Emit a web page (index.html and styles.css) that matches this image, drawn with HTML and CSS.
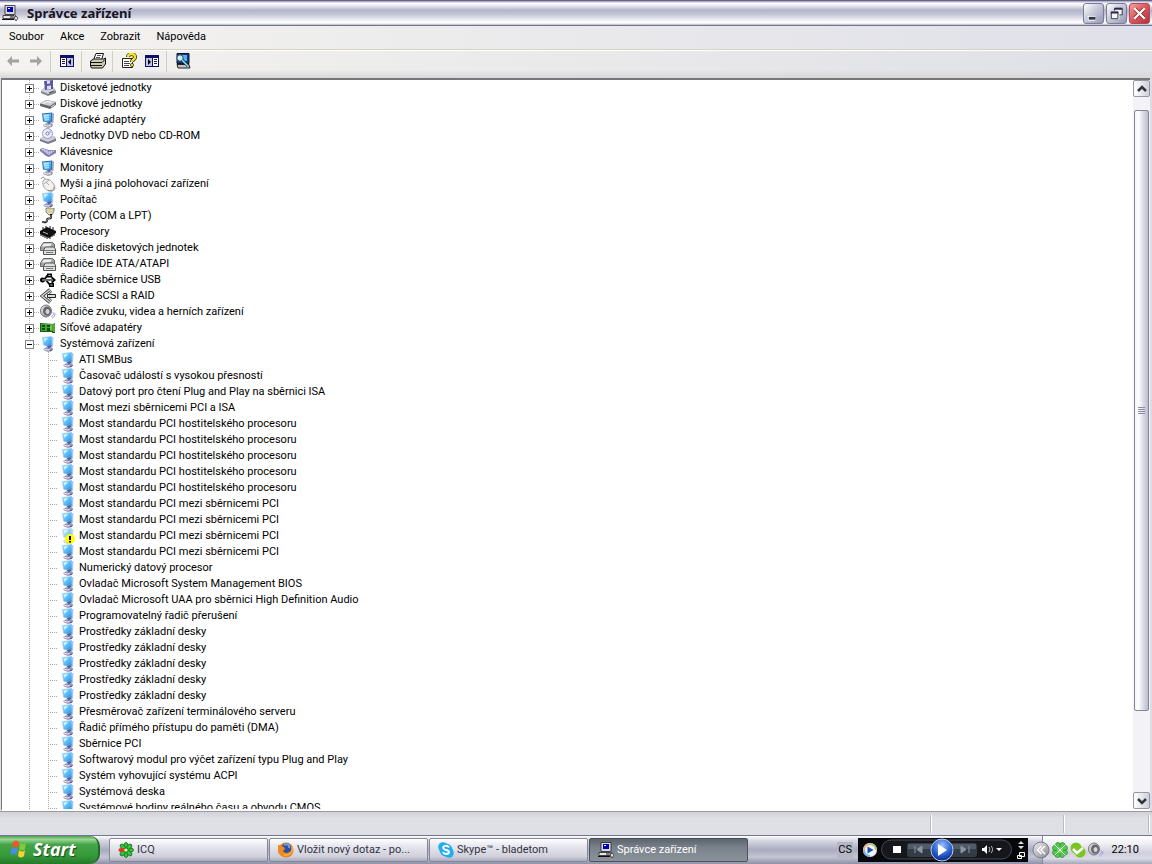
FILE: index.html
```html
<!DOCTYPE html>
<html lang="cs">
<head>
<meta charset="utf-8">
<title>Správce zařízení</title>
<link rel="stylesheet" href="styles.css">
</head>
<body>
<svg class="defs" aria-hidden="true">
<defs>
<linearGradient id="scr" x1="0" y1="0" x2="1" y2="1"><stop offset="0" stop-color="#a8e4fb"/><stop offset=".5" stop-color="#58bcf8"/><stop offset="1" stop-color="#2f86e0"/></linearGradient>
<linearGradient id="gry" x1="0" y1="0" x2="1" y2="1"><stop offset="0" stop-color="#f2f2f4"/><stop offset="1" stop-color="#85858c"/></linearGradient>
<radialGradient id="ball" cx=".5" cy=".3" r=".7"><stop offset="0" stop-color="#9cc6ff"/><stop offset=".6" stop-color="#2a5fd0"/><stop offset="1" stop-color="#0b2a80"/></radialGradient>
</defs>
<symbol id="system" viewBox="0 0 16 16"><path d="M11 .5l2.500 1-.5 9-2 1z" fill="#b4c4e4"/><path d="M2.500 1.500l9-1 .5 9.500-4 .5-4.500-1.500z" fill="url(#scr)" stroke="#8cc8f0" stroke-width=".6"/><path d="M4 2.500l4-.5-3.500 4z" fill="#d6f4ff"/><path d="M7 10l4.500-.5L10 13H8z" fill="#5a5c98"/><path d="M3 13l3.500-2 2 1.500L12 11l1 2-1 2-4 1-4-1.500z" fill="#9c98bc"/><path d="M3.500 13l4 1 2-.5" fill="none" stroke="#e8e8f4"/><path d="M10 15l2.500-1.500" stroke="#54547c"/></symbol>
<symbol id="monitor" viewBox="0 0 16 16"><path d="M12 .5l2 1-.5 9-2 1z" fill="#a4a8bc"/><path d="M2 1.500l10-1v9.500l-4 .5-5-1z" fill="#2c70b8"/><path d="M3 2.500l8-1v8l-3 .5-4-1z" fill="url(#scr)"/><path d="M4 4l5-.7M4 6l5-.4M5 8l4-.3" stroke="#d8f2ff"/><path d="M7 10l4-.5-1 3-2 .5z" fill="#62668a"/><path d="M3 13l4-2 2 1 3-1 1 2-1 2-4 1-4-1.500z" fill="#a0a0b4"/><path d="M4 13l4 1 3-1" fill="none" stroke="#f2f2f4"/></symbol>
<symbol id="floppy" viewBox="0 0 16 16"><path d="M1 11l4-4h8l3 4v2l-8 3-7-3z" fill="#81818b"/><path d="M1 11l4-4h8l2 4-7 3z" fill="#d0d0d8"/><path d="M4 1l9-1v9l-8 1z" fill="#5c58a4"/><path d="M7 .8l3-.3v3L7 4zM7 6l4-.5V9l-4 .6z" fill="#dcdcf2"/><path d="M9 13l5-2" stroke="#444"/></symbol>
<symbol id="disk" viewBox="0 0 16 16"><path d="M0 7.500l6-3.500 10 2v3l-6 4-10-3z" fill="#66666c"/><path d="M0 7.500l6-3.500 10 2-6 4z" fill="#cfcfd2"/><path d="M3 7.500l4-2 4 1" fill="none" stroke="#fff"/><path d="M11 11l4-2.500" stroke="#ddd"/></symbol>
<symbol id="cd" viewBox="0 0 16 16"><path d="M0 11l4-3h10l2 3v2l-8 3-8-3z" fill="#77778b"/><path d="M0 11l4-3h10l1 3-7 3z" fill="#cccde2"/><circle cx="7.500" cy="5.500" r="5" fill="#ececf6" stroke="#9a9abb"/><path d="M7.500 5.500l3-4 2 3z" fill="#b8c8ff"/><circle cx="7.500" cy="5.500" r="1.500" fill="#fff" stroke="#7878aa"/></symbol>
<symbol id="keyboard" viewBox="0 0 16 16"><path d="M0 5l3-1 6 2 7 0v3l-7 4-3-1-6-5z" fill="#8080aa"/><path d="M1 5.500l3-1 5 2.500 6-.5-6 4.500z" fill="#d2d2ee"/><path d="M3 6l6 4M5 5.500l6 4M8 7.500l5 .5" stroke="#8a8aba" stroke-dasharray="1 1"/></symbol>
<symbol id="mouse" viewBox="0 0 16 16"><path d="M1 3c1-3 5-2 4 2" fill="none" stroke="#888"/><path d="M3 5c3-3 7-2 10 2 4 6 1 9-3 8-5 0-8-6-7-10z" fill="#f2f1ed" stroke="#a5a39f"/><path d="M4 8l5-4M6 6l3 3" stroke="#aaa"/><path d="M8 14.500c5 1 6-1 6-4" fill="none" stroke="#85837f"/></symbol>
<symbol id="port" viewBox="0 0 16 16"><path d="M6 0h8v3l-2 4H9L6 4z" fill="#dadada" stroke="#555" stroke-width=".7"/><path d="M7 2h6M8 4h4" stroke="#e0d040"/><path d="M11 6v3c0 3-4 0-4 3s-3 2-5 2" fill="none" stroke="#111" stroke-width="2"/><path d="M11 7v2c0 2-4 1-4 3s-3 2-5 2" fill="none" stroke="#ccc" stroke-width=".7"/></symbol>
<symbol id="cpu" viewBox="0 0 16 16"><path d="M0 7l7-4 9 4v2l-7 5-9-4z" fill="#111"/><path d="M1 9v3M3 10v3M5 11v3M7 12v3M10 12v3M12 10v3M14 9v3M3 3v3M6 2v3M10 2v3M13 3v3" stroke="#111"/><path d="M3 8l5 2" stroke="#bbb"/></symbol>
<symbol id="controller" viewBox="0 0 16 16"><path d="M.5 7l3-4.500h9l2 2v6H.5z" fill="#a2a2a2" stroke="#666"/><path d="M1.500 6.500l2.500-3h8l-2 3z" fill="#eee"/><path d="M3.500 10l2-3h8l2 2v5.500h-12z" fill="#dededc" stroke="#555"/><path d="M4 10.500h11M6 12.500h7" stroke="#777"/></symbol>
<symbol id="usb" viewBox="0 0 16 16"><path d="M2 8h12M4 8l3-4h3M6 8l4 5h2" fill="none" stroke="#111" stroke-width="2"/><path d="M11.500 4l4.500 4-4.500 4z"/><circle cx="2.500" cy="8" r="2.500"/><path d="M7 1.500h5v4H7zM9 11h5v4H9z"/><path d="M8.500 3.500h2M10.500 13h2M2 8h11" stroke="#ccc"/></symbol>
<symbol id="scsi" viewBox="0 0 16 16"><path d="M10 1.500L2 8l8 6.500" fill="none" stroke="#333" stroke-width="3"/><path d="M10 1.500L2 8l8 6.500" fill="none" stroke="#ddd" stroke-width="1.400"/><path d="M12 3.500L7 8l5 4.500" fill="none" stroke="#333"/><path d="M7.500 6.500h8v3h-8z" fill="#ddd" stroke="#222"/></symbol>
<symbol id="sound" viewBox="0 0 16 16"><ellipse cx="6" cy="7" rx="5.500" ry="6" fill="url(#gry)" stroke="#77777c"/><ellipse cx="7" cy="7" rx="4" ry="4.500" fill="#66666c"/><ellipse cx="7.500" cy="7.500" rx="2" ry="2.500" fill="#d4d4d8"/><path d="M13 8c1 2 0 4-2 5M15 9c0 3-1 4-3 5.500" fill="none" stroke="#a4a4de"/></symbol>
<symbol id="net" viewBox="0 0 16 16"><path d="M0 3l13 1 2-1v10h-3v-1H0z" fill="#176017"/><path d="M1 4h12v7H1z" fill="#46a52e"/><path d="M2 5h3v2H2zM7 5h3v2H7zM2 8h3v2H2zM7 8h3v3H7z" fill="#124a10"/><path d="M11 5v5M14 4v8" stroke="#a9df7d"/></symbol>
<symbol id="warn" viewBox="0 0 16 16"><use href="#system" width="16" height="16" opacity=".65"/><circle cx="10" cy="11" r="5" fill="#ffff00"/><path d="M10 8v4M10 13v1.500" stroke="#000" stroke-width="2"/></symbol>
<symbol id="devmgr" viewBox="0 0 16 16"><path d="M3 .5h10v9H3z" fill="#d8d8d8" stroke="#222" stroke-width=".8"/><path d="M5 2h6v5H5z" fill="#0000b8"/><path d="M6 3h2v1H6z" fill="#fff"/><path d="M1 10.500h11v3H1z" fill="#e8e8e8" stroke="#222" stroke-width=".8"/><path d="M0 14.500h12M8 12h3" stroke="#111"/><path d="M12 9l2 2v3" fill="none" stroke="#555"/><path d="M12 13l2-2 2 2-2 3z" fill="#ddd" stroke="#333" stroke-width=".8"/></symbol>
<symbol id="icq" viewBox="0 0 16 16"><g fill="#3cc43c" stroke="#0b6b18" stroke-width=".8"><ellipse cx="8" cy="3.500" rx="2" ry="3"/><ellipse cx="8" cy="12.500" rx="2" ry="3"/><ellipse cx="12.500" cy="8" rx="3" ry="2"/><ellipse cx="11.300" cy="4.700" rx="2" ry="3" transform="rotate(45 11.300 4.700)"/><ellipse cx="11.300" cy="11.300" rx="2" ry="3" transform="rotate(-45 11.300 11.300)"/><ellipse cx="4.700" cy="11.300" rx="2" ry="3" transform="rotate(45 4.700 11.300)"/><ellipse cx="4.700" cy="4.700" rx="2" ry="3" transform="rotate(-45 4.700 4.700)"/></g><ellipse cx="3.500" cy="8" rx="3" ry="2" fill="#e33525"/><circle cx="8" cy="8" r="1.600" fill="#e4f4a0"/></symbol>
<symbol id="clover" viewBox="0 0 16 16"><g fill="#58c850" stroke="#218a26" stroke-width=".7"><circle cx="6" cy="3" r="2.500"/><circle cx="10.500" cy="3" r="2.500"/><circle cx="13" cy="6" r="2.500"/><circle cx="13" cy="10.500" r="2.500"/><circle cx="10" cy="13" r="2.500"/><circle cx="5.500" cy="13" r="2.500"/><circle cx="3" cy="10.500" r="2.500"/><circle cx="3" cy="6" r="2.500"/></g><circle cx="8" cy="8" r="3.500" fill="#6ace5c"/><path d="M3 3l10 10M13 3L3 13" stroke="#e4f6df"/></symbol>
</svg>

<header class="titlebar">
<svg class="ico"><use href="#devmgr"/></svg>
<h1>Správce zařízení</h1>
<div class="winbtns">
<button class="winbtn" aria-label="Minimalizovat"><svg viewBox="0 0 20 20"><path d="M4 15h8" stroke="#fff" stroke-width="5"/><path d="M5 15h7" stroke="#33334d" stroke-width="3"/></svg></button>
<button class="winbtn" aria-label="Obnovit"><svg viewBox="0 0 20 20"><path d="M8 4h8v8h-3v4H4V8h4z" fill="#f4f4f8"/><g fill="none" stroke="#2a2a44"><path d="M8 7V4.500h8v7h-3"/><path d="M8 5h8" stroke-width="2"/><path d="M4.500 8.500h7v7h-7z"/><path d="M4 9h8" stroke-width="2"/></g></svg></button>
<button class="winbtn close" aria-label="Zavřít"><svg viewBox="0 0 20 20"><path d="M5 5l10 10M15 5L5 15" stroke="#8c1c20" stroke-width="4"/><path d="M4.500 4.500l11 11M15.500 4.500l-11 11" stroke="#fff" stroke-width="2.500"/></svg></button>
</div>
</header>

<nav class="menubar">
<button>Soubor</button><button>Akce</button><button>Zobrazit</button><button>Nápověda</button>
</nav>

<div class="toolbar">
<button aria-label="Zpět"><svg viewBox="0 0 16 16"><path d="M2 8l5-5v3.500h7v3H7V13z" fill="#a2a2a0"/></svg></button>
<button aria-label="Vpřed"><svg viewBox="0 0 16 16"><path d="M14 8L9 3v3.500H2v3h7V13z" fill="#a2a2a0"/></svg></button>
<span class="sep"></span>
<button aria-label="Zobrazit strom"><svg viewBox="0 0 16 16"><path d="M1 2h14v12H1z" fill="#10106a"/><path d="M2 5h5v8H2z" fill="#fff"/><path d="M3 6.500h3M3 8.500h3M3 10.500h3" stroke="#222"/><path d="M8 5h6v8H8z" fill="#c0c6ea"/><path d="M12 6v6L9 9z"/></svg></button>
<span class="sep"></span>
<button aria-label="Tisk"><svg viewBox="0 0 16 16"><path d="M6 .5h7.500l-2 6.500H3.500z" fill="#fff" stroke="#111"/><path d="M7 2.500h4M6 4.500h4" stroke="#555"/><path d="M.5 8l3-2h10l2-1v6l-3 4h-11l-1-2z" fill="#ccc9b6" stroke="#111"/><path d="M1 9.500h11l3-3M1 12.500h11" fill="none" stroke="#111"/><path d="M8 11h3" stroke="#e2d31a"/></svg></button>
<span class="sep"></span>
<button aria-label="Vlastnosti"><svg viewBox="0 0 16 16"><path d="M1.500 5.500h10v9h-10z" fill="#fff" stroke="#222"/><path d="M3 8.500h5M3 10.500h6M3 12.500h5" stroke="#444"/><path d="M7 4c0-4 7-4 7 0 0 3-3 2-3 5" fill="none" stroke="#222" stroke-width="4"/><path d="M7 4c0-4 7-4 7 0 0 3-3 2-3 5" fill="none" stroke="#f6e51d" stroke-width="2.400"/><circle cx="11" cy="12" r="1.600" fill="#f6e51d" stroke="#222" stroke-width=".7"/></svg></button>
<button aria-label="Zobrazit podokno"><svg viewBox="0 0 16 16"><path d="M1 2h14v12H1z" fill="#10106a"/><path d="M9 5h5v8H9z" fill="#fff"/><path d="M2 5h6v8H2z" fill="#c0c6ea"/><path d="M10 6.500h3M10 8.500h3M10 10.500h3" stroke="#222"/><path d="M4 6v6l3-3z"/></svg></button>
<span class="sep"></span>
<button aria-label="Vyhledat změny hardwaru"><svg viewBox="0 0 16 16"><path d="M2 .5h12v10H2z" fill="#0a3a92" stroke="#112"/><path d="M3 2h9v6H3z" fill="#54b0e8"/><path d="M2 11.500h12l1 3.500H3z" fill="#bfc4cf" stroke="#222"/><circle cx="5" cy="5" r="3.200" fill="#c4f0fa" stroke="#345"/><path d="M7 7l6 6" stroke="#234" stroke-width="3"/><path d="M7 7l6 6" stroke="#8ce2f4" stroke-width="1.500"/></svg></button>
</div>

<main class="client">
<ul class="tree">
<li><div class="row"><button class="exp" aria-label="Rozbalit"></button><svg class="ico"><use href="#floppy"/></svg>Disketové jednotky</div></li>
<li><div class="row"><button class="exp" aria-label="Rozbalit"></button><svg class="ico"><use href="#disk"/></svg>Diskové jednotky</div></li>
<li><div class="row"><button class="exp" aria-label="Rozbalit"></button><svg class="ico"><use href="#monitor"/></svg>Grafické adaptéry</div></li>
<li><div class="row"><button class="exp" aria-label="Rozbalit"></button><svg class="ico"><use href="#cd"/></svg>Jednotky DVD nebo CD-ROM</div></li>
<li><div class="row"><button class="exp" aria-label="Rozbalit"></button><svg class="ico"><use href="#keyboard"/></svg>Klávesnice</div></li>
<li><div class="row"><button class="exp" aria-label="Rozbalit"></button><svg class="ico"><use href="#monitor"/></svg>Monitory</div></li>
<li><div class="row"><button class="exp" aria-label="Rozbalit"></button><svg class="ico"><use href="#mouse"/></svg>Myši a jiná polohovací zařízení</div></li>
<li><div class="row"><button class="exp" aria-label="Rozbalit"></button><svg class="ico"><use href="#system"/></svg>Počítač</div></li>
<li><div class="row"><button class="exp" aria-label="Rozbalit"></button><svg class="ico"><use href="#port"/></svg>Porty (COM a LPT)</div></li>
<li><div class="row"><button class="exp" aria-label="Rozbalit"></button><svg class="ico"><use href="#cpu"/></svg>Procesory</div></li>
<li><div class="row"><button class="exp" aria-label="Rozbalit"></button><svg class="ico"><use href="#controller"/></svg>Řadiče disketových jednotek</div></li>
<li><div class="row"><button class="exp" aria-label="Rozbalit"></button><svg class="ico"><use href="#controller"/></svg>Řadiče IDE ATA/ATAPI</div></li>
<li><div class="row"><button class="exp" aria-label="Rozbalit"></button><svg class="ico"><use href="#usb"/></svg>Řadiče sběrnice USB</div></li>
<li><div class="row"><button class="exp" aria-label="Rozbalit"></button><svg class="ico"><use href="#scsi"/></svg>Řadiče SCSI a RAID</div></li>
<li><div class="row"><button class="exp" aria-label="Rozbalit"></button><svg class="ico"><use href="#sound"/></svg>Řadiče zvuku, videa a herních zařízení</div></li>
<li><div class="row"><button class="exp" aria-label="Rozbalit"></button><svg class="ico"><use href="#net"/></svg>Síťové adapatéry</div></li>
<li><div class="row"><button class="exp open" aria-label="Sbalit"></button><svg class="ico"><use href="#system"/></svg>Systémová zařízení</div>
<ul class="sub">
<li class="row"><svg class="ico"><use href="#system"/></svg>ATI SMBus</li>
<li class="row"><svg class="ico"><use href="#system"/></svg>Časovač událostí s vysokou přesností</li>
<li class="row"><svg class="ico"><use href="#system"/></svg>Datový port pro čtení Plug and Play na sběrnici ISA</li>
<li class="row"><svg class="ico"><use href="#system"/></svg>Most mezi sběrnicemi PCI a ISA</li>
<li class="row"><svg class="ico"><use href="#system"/></svg>Most standardu PCI hostitelského procesoru</li>
<li class="row"><svg class="ico"><use href="#system"/></svg>Most standardu PCI hostitelského procesoru</li>
<li class="row"><svg class="ico"><use href="#system"/></svg>Most standardu PCI hostitelského procesoru</li>
<li class="row"><svg class="ico"><use href="#system"/></svg>Most standardu PCI hostitelského procesoru</li>
<li class="row"><svg class="ico"><use href="#system"/></svg>Most standardu PCI hostitelského procesoru</li>
<li class="row"><svg class="ico"><use href="#system"/></svg>Most standardu PCI mezi sběrnicemi PCI</li>
<li class="row"><svg class="ico"><use href="#system"/></svg>Most standardu PCI mezi sběrnicemi PCI</li>
<li class="row"><svg class="ico"><use href="#warn"/></svg>Most standardu PCI mezi sběrnicemi PCI</li>
<li class="row"><svg class="ico"><use href="#system"/></svg>Most standardu PCI mezi sběrnicemi PCI</li>
<li class="row"><svg class="ico"><use href="#system"/></svg>Numerický datový procesor</li>
<li class="row"><svg class="ico"><use href="#system"/></svg>Ovladač Microsoft System Management BIOS</li>
<li class="row"><svg class="ico"><use href="#system"/></svg>Ovladač Microsoft UAA pro sběrnici High Definition Audio</li>
<li class="row"><svg class="ico"><use href="#system"/></svg>Programovatelný řadič přerušení</li>
<li class="row"><svg class="ico"><use href="#system"/></svg>Prostředky základní desky</li>
<li class="row"><svg class="ico"><use href="#system"/></svg>Prostředky základní desky</li>
<li class="row"><svg class="ico"><use href="#system"/></svg>Prostředky základní desky</li>
<li class="row"><svg class="ico"><use href="#system"/></svg>Prostředky základní desky</li>
<li class="row"><svg class="ico"><use href="#system"/></svg>Prostředky základní desky</li>
<li class="row"><svg class="ico"><use href="#system"/></svg>Přesměrovač zařízení terminálového serveru</li>
<li class="row"><svg class="ico"><use href="#system"/></svg>Řadič přímého přístupu do paměti (DMA)</li>
<li class="row"><svg class="ico"><use href="#system"/></svg>Sběrnice PCI</li>
<li class="row"><svg class="ico"><use href="#system"/></svg>Softwarový modul pro výčet zařízení typu Plug and Play</li>
<li class="row"><svg class="ico"><use href="#system"/></svg>Systém vyhovující systému ACPI</li>
<li class="row"><svg class="ico"><use href="#system"/></svg>Systémová deska</li>
<li class="row"><svg class="ico"><use href="#system"/></svg>Systémové hodiny reálného času a obvodu CMOS</li>
</ul></li>
</ul>
<div class="scroll">
<button class="arrow" aria-label="Nahoru"><svg viewBox="0 0 14 14"><path d="M3 9l4-4 4 4" fill="none" stroke="#33343c" stroke-width="2.500"/></svg></button>
<div class="track"><div class="thumb"><i></i><i></i><i></i><i></i></div></div>
<button class="arrow" aria-label="Dolů"><svg viewBox="0 0 14 14"><path d="M3 5l4 4 4-4" fill="none" stroke="#33343c" stroke-width="2.500"/></svg></button>
</div>
</main>

<div class="status"><span class="wide"></span><span class="mid"></span><span class="end"></span></div>

<footer class="taskbar">
<button class="start"><svg viewBox="0 0 20 20"><path d="M4 3c2-2 4-2 6 0L9 9C7 7 5 7 3 9z" fill="#f0562a"/><path d="M11 4c2 1.500 4 1.500 6 0l-1 6c-2 2-4 2-6 0z" fill="#7ccb3a"/><path d="M2.500 10c2-2 4-2 6 0l-1 6c-2-2-4-2-6 0z" fill="#4a8cf0"/><path d="M10 11c2 2 4 2 6 0l-1 6c-2 2-4 2-6 0z" fill="#fbd033"/></svg>Start</button>
<div class="tasks">
<button class="task"><svg class="ico"><use href="#icq"/></svg><span>ICQ</span></button>
<button class="task"><svg class="ico" viewBox="0 0 16 16"><circle cx="8" cy="8" r="7.500" fill="#e8701a"/><circle cx="8.500" cy="6.500" r="5" fill="#2a4fa8"/><path d="M6 3c3-2 6 0 5 3" fill="none" stroke="#6aa4e6" stroke-width="2"/><path d="M1 3l2 1 3 1 1 2-2 2c2 3 6 2 8 0 1-3 0-5-1-7 3 2 4 6 2 10-3 4-10 4-13 0-2-3-2-6-2-9z" fill="#ee8a20"/><path d="M14 5c1 5-3 9-8 8" fill="none" stroke="#fbc93a"/></svg><span>Vložit nový dotaz - po...</span></button>
<button class="task"><svg class="ico" viewBox="0 0 16 16"><circle cx="5" cy="5" r="4.800" fill="#22aeea"/><circle cx="11" cy="11" r="4.800" fill="#22aeea"/><circle cx="8" cy="8" r="6.500" fill="#22aeea"/><path d="M11 5.500C9.500 3 5 3.500 5.200 6c.3 2.500 5.700 1.500 5.700 4 0 2.500-5 2.500-6 0" fill="none" stroke="#fff" stroke-width="2"/></svg><span>Skype™ - bladetom</span></button>
<button class="task active"><svg class="ico"><use href="#devmgr"/></svg><span>Správce zařízení</span></button>
</div>
<span class="lang">CS</span>
<div class="player">
<svg class="orb" viewBox="0 0 16 16"><circle cx="8" cy="8" r="7" fill="#e8ecf4"/><path d="M8 1a7 7 0 0 1 7 7H8z" fill="#a4cc74"/><path d="M1 8a7 7 0 0 1 7-7v7z" fill="#f0b080"/><path d="M1 8a7 7 0 0 0 7 7V8z" fill="#78b4ec"/><circle cx="8" cy="8" r="5" fill="#f2f6fc"/><path d="M5.500 4.500l6 3.500-6 3.500z" fill="#1c4fae"/></svg>
<svg class="controls" viewBox="0 0 132 24"><rect x=".5" y="2" width="130" height="19" rx="9.500" fill="#15171c" stroke="#474b54"/><path d="M12 8h8v7h-8z" fill="#fff"/><rect x="26" y="5" width="70" height="14" rx="3" fill="#343c46"/><path d="M27 6h68v5H27z" fill="#525c68"/><path d="M34 8v7M41 8l-5 3.500 5 3.500zM88 8v7M80 8l5 3.500-5 3.500z" fill="#8c96a2" stroke="#8c96a2"/><circle cx="61" cy="12" r="11" fill="url(#ball)" stroke="#b9cdf0"/><path d="M57 6l9 6-9 6z" fill="#fff"/><path d="M101 10h2l3-3v9l-3-3h-2z" fill="#fff"/><path d="M108 9c1 2 1 3 0 5M110 8c2 2 2 5 0 7" fill="none" stroke="#ccc"/><path d="M115 10h6l-3 3z" fill="#fff"/></svg>
<svg class="mini" viewBox="0 0 10 24"><path d="M2 6l3-3 3 3zM2 8l3 3 3-3z" fill="#ddd"/><path d="M3.500 14.500h5v4h-5zM1.500 17.500h4v3h-4z" fill="#111" stroke="#fff"/></svg>
</div>
<div class="tray">
<button class="chev" aria-label="Zobrazit skryté ikony"><svg viewBox="0 0 18 18"><circle cx="9" cy="9" r="8" fill="url(#gry)" stroke="#777b8c"/><path d="M9.500 5l-4 4 4 4M13 5L9 9l4 4" fill="none" stroke="#fff" stroke-width="1.500"/></svg></button>
<svg class="ico"><use href="#clover"/></svg>
<svg class="ico" viewBox="0 0 16 16"><circle cx="6" cy="6" r="5.500" fill="#7ac520"/><circle cx="10" cy="10" r="5.500" fill="#7ac520"/><path d="M3 7l4 4 6-5" fill="none" stroke="#fff" stroke-width="2.500"/></svg>
<svg class="ico"><use href="#sound"/></svg>
<time>22:10</time>
</div>
</footer>
</body>
</html>
```
FILE: styles.css
```css
* { box-sizing: border-box; }
html, body { height: 100%; margin: 0; }
body {
  display: flex; flex-direction: column; overflow: hidden;
  font: 11px/16px Roboto, Tahoma, sans-serif;
  color: #000; background: #dcdde2;
}
button { font: inherit; color: inherit; background: none; border: 0; padding: 0; margin: 0; }
svg { display: block; flex: none; }
ul { list-style: none; margin: 0; padding: 0; }
.defs { position: absolute; width: 0; height: 0; }
.ico { width: 16px; height: 16px; }

.titlebar {
  display: flex; align-items: center; height: 26px; flex: none; padding: 0 2px; gap: 9px;
  border-top: 1px solid #62628a; border-bottom: 1px solid #74748e;
  background: linear-gradient(#9c9cb8, #fff 10%, #e2e2ee 22%, #b4b4ca 38%, #c4c4d6 55%, #f4f4f9 82%, #fff 92%, #b4b4c6);
}
.titlebar h1 { flex: 1; margin: 0; font: bold 13px/20px "Noto Sans", Tahoma, sans-serif; color: #14141e; }
.winbtns { display: flex; gap: 2px; }
.winbtn {
  width: 21px; height: 21px; border: 1px solid #7a7c9a; border-radius: 3px;
  background: linear-gradient(135deg, #fff, #c9cada 45%, #9698b0);
}
.winbtn svg { width: 19px; height: 19px; }
.close { border-color: #b04a55; background: linear-gradient(135deg, #f2a49c, #d8555a 50%, #b03440); }

.menubar {
  display: flex; align-items: center; gap: 16px; height: 23px; flex: none; padding: 0 9px 1px;
  background: linear-gradient(90deg, #f4f3ef, #dfe0e9);
}
.toolbar {
  display: flex; align-items: center; height: 29px; flex: none; padding: 0 1px 6px;
  border-top: 1px solid #d4d2c0; box-shadow: inset 0 1px #fff;
  background: linear-gradient(#ffffff00 70%, #d8d8da), linear-gradient(90deg, #f4f3ef, #dfe0e6);
}
.toolbar button { width: 23px; display: grid; place-items: center; }
.toolbar svg { width: 16px; height: 16px; }
.sep { width: 1px; height: 21px; margin: 0 4px 0 3px; background: #cfcec4; }

.client {
  flex: 1; min-height: 0; display: flex; margin: 0 2px 0 1px; background: #fff;
  border-top: 2px solid #77777a; border-bottom: 2px solid #fff; border-left: 1px solid #77777a;
}
.tree { flex: 1; overflow: hidden; padding-left: 23px; }
.tree > li {
  background: repeating-linear-gradient(#a8a8a8 0 1px, #ffffff00 1px 2px) 4px 0 / 1px 100% no-repeat;
}
.row { display: flex; align-items: center; height: 16px; gap: 4px; white-space: nowrap; }
.tree > li > .row { background: repeating-linear-gradient(90deg, #a8a8a8 0 1px, #ffffff00 1px 2px) 9px 8px / 6px 1px no-repeat; }
.exp {
  width: 9px; height: 9px; flex: none; border: 1px solid #848484; margin-right: 2px;
  background:
    linear-gradient(#000, #000) center / 5px 1px no-repeat,
    linear-gradient(#000, #000) center / 1px 5px no-repeat, #fff;
}
.open { background: linear-gradient(#000, #000) center / 5px 1px no-repeat, #fff; }
.sub {
  padding-left: 23px;
  background: repeating-linear-gradient(#a8a8a8 0 1px, #ffffff00 1px 2px) 23px 0 / 1px 100% no-repeat;
}
.sub .row { gap: 3px; }
.sub .row::before { content: ""; width: 9px; height: 1px; background: repeating-linear-gradient(90deg, #a8a8a8 0 1px, #fff 1px 2px); }

.scroll { width: 17px; flex: none; display: flex; flex-direction: column; background: #f3f3f7; }
.arrow {
  height: 17px; flex: none; border: 1px solid #9596a6; border-radius: 2px; display: grid; place-items: center;
  background: linear-gradient(90deg, #fff, #cfd0dc);
}
.arrow svg { width: 14px; height: 14px; }
.track { flex: 1; display: flex; flex-direction: column; }
.track::before { content: ""; flex: 13; }
.track::after { content: ""; flex: 81; }
.thumb {
  flex: 601; display: flex; flex-direction: column; justify-content: center; align-items: center; gap: 1px;
  margin: 0 1px; border: 1px solid #85869a; border-radius: 2px;
  background: linear-gradient(90deg, #f4f4fa, #fff 25%, #b9bace);
}
.thumb i { width: 7px; height: 1px; background: #8d8fa6; }

.status { display: flex; height: 24px; flex: none; padding: 3px 2px 2px 0; border-top: 1px solid #9a9aa0; background: linear-gradient(#d2d2d8, #dfe0e5 30%, #dfe0e5); }
.status span { border-right: 1px solid #fff; box-shadow: -1px 0 #b9bac4 inset; }
.wide { flex: 1; }
.mid { width: 133px; }
.end { width: 85px; }

.taskbar {
  display: flex; align-items: center; height: 29px; flex: none; border-top: 1px solid #74768e;
  background: linear-gradient(#fff, #d8d9e4 15%, #a9abbf 50%, #c4c6d4 75%, #8e90a6);
}
.start {
  display: flex; align-items: center; gap: 4px; align-self: stretch; width: 100px; padding: 0 0 2px 9px; flex: none;
  font: italic bold 18px/24px "Open Sans", Tahoma, sans-serif; color: #fff; text-shadow: 1px 1px 1px #1c4a1c;
  border-radius: 0 10px 10px 0; border-right: 2px solid #1f6b27;
  background: linear-gradient(#4e9e50, #9bd896 12%, #45a548 30%, #369a3a 70%, #237a2a);
}
.start svg { width: 20px; height: 20px; }
.tasks { flex: 1; display: flex; gap: 1px; padding-left: 9px; min-width: 0; }
.task {
  display: flex; align-items: center; gap: 3px; width: 159px; height: 24px; padding: 0 10px 0 8px; text-align: left; color: #33333e;
  border: 1px solid #85879c; border-radius: 2px; background: linear-gradient(#fff, #e8e8f0 30%, #cfd0dc 80%, #a9abba);
}
.task span { flex: 1; white-space: nowrap; }
.active { color: #fff; border-color: #4c525c; background: linear-gradient(#5c636e, #7a838c 40%, #8a929a); }
.lang { padding: 0 1px; margin-right: 5px; background: #b4b6c6; }
.player { display: flex; align-items: center; width: 170px; height: 24px; flex: none; background: #07080b; padding: 0 2px 0 4px; gap: 3px; }
.orb { width: 16px; height: 16px; }
.controls { width: 132px; height: 24px; }
.mini { width: 10px; height: 24px; }
.tray {
  display: flex; align-items: center; align-self: stretch; gap: 2px; flex: none; width: 110px; margin-left: 14px; padding-right: 13px;
  border-left: 1px solid #8688a0; background: linear-gradient(#fff, #f1f1f6 25%, #cfd0dc 60%, #dadbe5 80%, #a5a7ba);
}
.chev { margin-left: -11px; }
.chev svg { width: 18px; height: 18px; }
.tray time { margin-left: auto; }
```
